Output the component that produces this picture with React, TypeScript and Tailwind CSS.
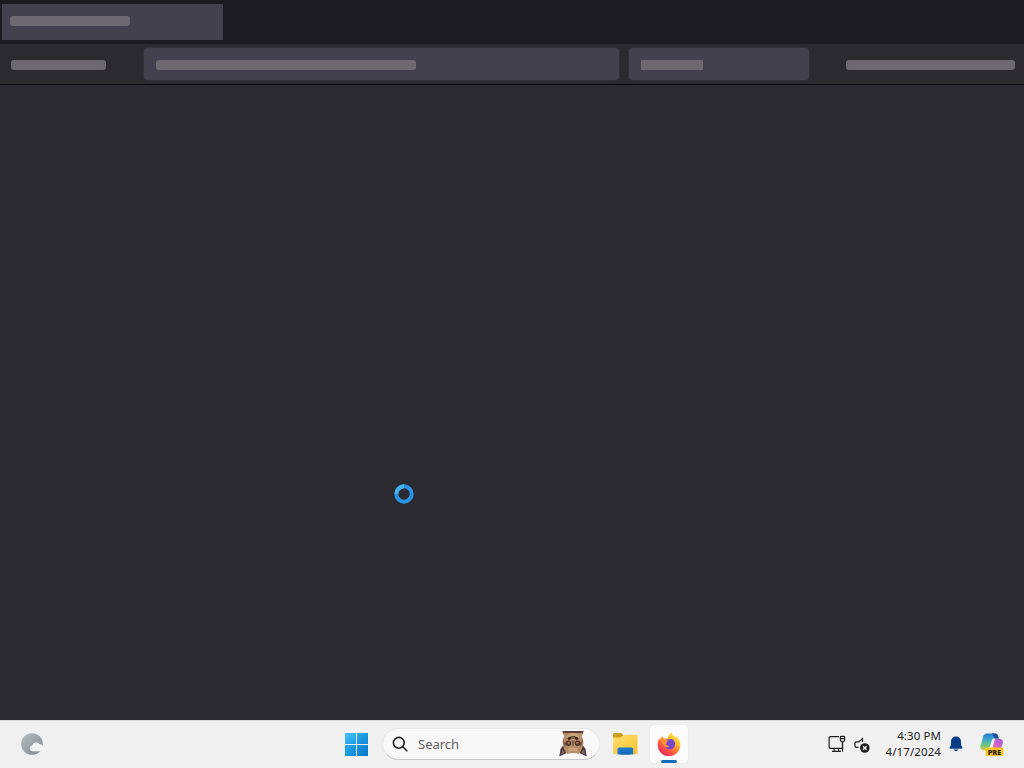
const WeatherIcon = () => (
  <svg width="24" height="24" viewBox="0 0 24 24">
    <defs>
      <linearGradient id="moon" x1="0" y1="0" x2="1" y2="1">
        <stop offset="0" stopColor="#b4bcc0" />
        <stop offset="1" stopColor="#7f898f" />
      </linearGradient>
    </defs>
    <circle cx="12" cy="12" r="10.8" fill="url(#moon)" />
    <path
      d="M12.500 19.300a3 3 0 0 1-.5-5.900 4.200 4.200 0 0 1 7.400-1.400 3.500 3.500 0 0 1 3.500 3.600 3.700 3.700 0 0 1-3.600 3.700Z"
      fill="#f0f3f5"
    />
  </svg>
);

const StartIcon = () => (
  <svg width="24" height="24" viewBox="0 0 24 24">
    <defs>
      <linearGradient id="win" x1="0" y1="0" x2="24" y2="24" gradientUnits="userSpaceOnUse">
        <stop offset="0" stopColor="#4cc4f6" />
        <stop offset=".5" stopColor="#1799e2" />
        <stop offset="1" stopColor="#0873cb" />
      </linearGradient>
    </defs>
    <path d="M0 1h11v11H0ZM12 1h11v11H12ZM0 13h11v11H0ZM12 13h11v11H12Z" fill="url(#win)" />
  </svg>
);

// Upside-down bat that hangs in the search box
const BatIcon = () => (
  <svg width="28" height="26" viewBox="0 0 28 26">
    <path d="M5 13 1.500 18 .3 25.500 7.500 22ZM23 13l3.500 5 1.200 7.500L20.500 22Z" fill="#463a3d" />
    <path d="M3.300 18.500 2 23.500l3.500-2ZM24.700 18.500l1.300 5-3.500-2Z" fill="#8b6a5e" />
    <path
      d="M3.500 0h21c0 2.500-.6 3.500-2 5 1.500 2 2.200 5.500 1.700 8.500-.5 3.500-2.200 6.500-4.200 9.500-3.500-1.200-8.500-1.200-12 0-2-3-3.700-6-4.200-9.500C3.300 10.500 4 7 5.500 5 4.100 3.500 3.500 2.500 3.500 0Z"
      fill="#b68d68"
    />
    <path d="M3.500 0h21l-.7 2H4.200Z" fill="#594039" />
    <path d="M4.500 8c.5 2 1 3 2.800 4l-1 4c-1.600-2-2.400-5-1.800-8ZM23.500 8c-.5 2-1 3-2.800 4l1 4c1.600-2 2.400-5 1.800-8Z" fill="#795948" />
    <ellipse cx="14" cy="5.500" rx="6.200" ry="3.500" fill="#cca47a" />
    <path d="M8.500 8c0-3.800 11-3.800 11 0l-1.800 1.200c-1.800-2-5.600-2-7.400 0Z" fill="#3b2822" />
    <path d="M12 7.300c1-.7 3-.7 4 0" stroke="#c88367" fill="none" />
    <circle cx="9.400" cy="12.200" r="2.700" fill="#49322a" />
    <circle cx="18.600" cy="12.200" r="2.700" fill="#49322a" />
    <circle cx="9.600" cy="12" r="1.300" fill="#a86e4e" />
    <circle cx="18.400" cy="12" r="1.300" fill="#a86e4e" />
    <path d="M12.700 9.500h2.600l-.3 5h-2Z" fill="#835f49" />
    <path d="M9 17.500c3-1.500 7-1.500 10 0l-1.200 3c-2.500-.6-5.100-.6-7.600 0Z" fill="#cba27c" />
  </svg>
);

const ExplorerIcon = () => (
  <svg width="25" height="24" viewBox="0 0 25 24">
    <defs>
      <linearGradient id="folder" x1="0" y1="0" x2="1" y2="1">
        <stop offset="0" stopColor="#ffdf6e" />
        <stop offset="1" stopColor="#f6c02f" />
      </linearGradient>
    </defs>
    <path d="M0 2.500A1.500 1.500 0 0 1 1.500 1h6.800L10.500 3.200V8H0Z" fill="#cb9f1c" />
    <path d="M0 5.500h7.500L11 2.800h12.200A1.300 1.300 0 0 1 24.500 4v17a1.300 1.300 0 0 1-1.300 1.300H1.500A1.500 1.500 0 0 1 0 20.800Z" fill="url(#folder)" />
    <path d="M4.500 22.500v-5.300a1.800 1.800 0 0 1 1.800-1.800h12.100a1.800 1.800 0 0 1 1.800 1.800v5.300Z" fill="#1877c8" />
    <path d="M7.500 19.800H17v2.700H7.500Z" fill="#1169b8" />
  </svg>
);

const FirefoxIcon = () => (
  <svg width="24" height="24" viewBox="0 0 24 24">
    <defs>
      <linearGradient id="fox" x1="20" y1="2" x2="5" y2="22" gradientUnits="userSpaceOnUse">
        <stop offset="0" stopColor="#fff04a" />
        <stop offset=".35" stopColor="#ffb52b" />
        <stop offset=".65" stopColor="#ff6539" />
        <stop offset="1" stopColor="#ed2560" />
      </linearGradient>
    </defs>
    <path
      d="M14.700.5c.2 2.400 2.200 3.200 3.500 4.700l.8-1c2.800 2.200 4.400 5.400 4.300 8.700a11.300 11.300 0 0 1-22.600 0c0-3.300.9-5.400 2-6.700l.3 1.500c.6-1.700 1.700-2.800 2.900-3.400 0 1 .4 1.900.9 2.400 1.200-.3 2.400-.3 3.600.1.700-2.800 2.100-4.800 4.300-6.300Z"
      fill="url(#fox)"
    />
    <path d="M7.600 9c1.400-1.700 3.200-2.100 4.700-1.500 1.300-.7 2.900-.5 3.900.3 2.100 1.500 2.500 4.800 1.100 7.200-1.500 2.300-4.700 3-7 1.700-1.700-1-2.700-2.600-2.600-4.300Z" fill="#7547ce" />
    <path d="M3.200 8c1.500-1.500 3.700-1.600 5.300-1 .7.300 1.300.9 1.700 1.300h1.300c-.3 1.200-1.600 1.400-1.900 2-.3.900.3 1.500-.8 2 1 1.300 2.400 1.200 3.600 1.600-1 1.500-3 1.800-4.500.6-2.200-1.500-3.200-4.200-4.700-6.500Z" fill="#ff9232" />
  </svg>
);

const NetworkIcon = () => (
  <svg width="18" height="18" viewBox="0 0 18 18" fill="none" stroke="#202020" strokeWidth="1.200">
    <path d="M11 1.600H2.500A1.400 1.400 0 0 0 1.100 3v9a1.400 1.400 0 0 0 1.400 1.400H14.500V6.500" />
    <path d="M6.200 13.500v2.800M10.500 13.500v2.800M4 16.400h9" />
    <path d="M14.500 6.500v10.100" />
    <path d="M13 1.400h3a.6.6 0 0 1 .6.600v3a1.500 1.500 0 0 1-1.500 1.500h-1.200A1.500 1.500 0 0 1 12.400 5V2a.6.600 0 0 1 .6-.6ZM12.600 3.600h4" />
  </svg>
);

const MutedIcon = () => (
  <svg width="16" height="16" viewBox="0 0 16 16">
    <path d="M8.500 5V1.600L5 4.800H2.300A1.300 1.300 0 0 0 1 6v3a1.300 1.300 0 0 0 1.300 1.300h2.200" fill="none" stroke="#202020" strokeWidth="1.200" />
    <circle cx="10.800" cy="11" r="4.800" fill="#202020" />
    <path d="m9 9.200 3.600 3.600m0-3.600L9 12.800" stroke="#f1f1f1" strokeWidth="1.300" />
  </svg>
);

const BellIcon = () => (
  <svg width="14" height="16" viewBox="0 0 14 16" fill="#053a87">
    <path d="M7 .5a5 5 0 0 0-5 5V9L.6 11.500a.8.8 0 0 0 .7 1.200h11.400a.8.800 0 0 0 .7-1.200L12 9V5.500a5 5 0 0 0-5-5ZM4.800 13.500a2.300 2.300 0 0 0 4.400 0Z" />
  </svg>
);

const CopilotIcon = () => (
  <svg width="24" height="24" viewBox="0 0 24 24">
    <defs>
      <linearGradient id="copA" x1="0" y1="0" x2="0" y2="1">
        <stop offset="0" stopColor="#2a76cf" />
        <stop offset=".35" stopColor="#3fa9cf" />
        <stop offset=".7" stopColor="#6fc37b" />
        <stop offset="1" stopColor="#e3cb45" />
      </linearGradient>
      <linearGradient id="copB" x1="1" y1="0" x2="0" y2="1">
        <stop offset="0" stopColor="#9a5ae0" />
        <stop offset=".5" stopColor="#d766c4" />
        <stop offset="1" stopColor="#f7936b" />
      </linearGradient>
    </defs>
    <path d="M7 1.500h8c1.800 0 2.500 1 3 2.500l.8 2.500h-4c-1.500 0-2.300.8-2.700 2l-2 7c-.6 2-1.500 3-3.400 3H4c-2.500 0-4.300-1.600-3.500-4.500L3 5c.7-2.300 1.900-3.500 4-3.500Z" fill="url(#copA)" />
    <path d="M12 1.500h3c1.800 0 2.500 1 3 2.500l.8 2.500h-4Z" fill="#1d4f9f" />
    <path d="M15.500 7h4c2.800 0 4 1.700 3.200 4.500l-2 6.500c-.6 2-2 3.500-4 3.500H9c1.800 0 2.400-1.200 2.900-3l2.600-10c.2-.8.500-1.500 1-1.500Z" fill="url(#copB)" />
    <path d="m10.500 12 1.500-4c.4-1.100 1-1.500 2.300-1.500l-2.100 6.500-1.200 3H9.200Z" fill="#ececf4" />
    <rect x="5.500" y="15.500" width="18" height="8.500" rx="1.500" fill="#f8c522" />
    <text x="14.500" y="22.500" fontFamily="Open Sans, sans-serif" fontSize="7.400" fontWeight="800" textAnchor="middle" fill="#2d2206">
      PRE
    </text>
  </svg>
);

const App = () => {
  return (
    <div className="flex h-screen w-full flex-col overflow-hidden bg-[#2b2a30] font-['Noto_Sans',sans-serif]">
      {/* Tab strip */}
      <div className="flex h-11 shrink-0 bg-[#1c1b20] pl-0.5 pt-1">
        <div className="h-9 w-[221px] bg-[#43414d] pl-2 pt-3">
          <div className="h-2.5 w-[120px] rounded-[3px] bg-[#6c6a70]" />
        </div>
      </div>

      {/* Toolbar */}
      <div className="flex h-[41px] shrink-0 items-center border-b border-[#08080c] bg-[#2b2a2f] pl-[11px]">
        <div className="mt-0.5 h-2.5 w-[95px] rounded-[3px] bg-[#6c6a70]" />
        <div className="ml-[38px] flex h-8 w-[475px] items-center rounded bg-[#43414d] pl-3 pt-0.5 shadow-[0_0_2px_#43414d]">
          <div className="h-2.5 w-[260px] rounded-[3px] bg-[#6c6a70]" />
        </div>
        <div className="ml-2.5 flex h-8 w-[180px] items-center rounded bg-[#43414d] pl-3 pt-0.5 shadow-[0_0_2px_#43414d]">
          <div className="h-2.5 w-[62px] bg-[#6c6a70]" />
        </div>
        <div className="ml-[37px] mt-0.5 h-2.5 w-[169px] rounded-[3px] bg-[#6c6a70]" />
      </div>

      {/* Page, still loading */}
      <div className="relative flex-1">
        <svg className="absolute left-[394px] top-[399px]" width="20" height="20" viewBox="0 0 20 20" fill="none">
          <circle cx="10" cy="10" r="7.700" stroke="#2993e6" strokeWidth="4" />
          <path d="M2.300 10A7.700 7.700 0 0 1 10 2.300" stroke="#42b3ef" strokeWidth="4" />
        </svg>
      </div>

      {/* Taskbar */}
      <div className="flex h-12 shrink-0 items-center border-t border-[#d9d7dc] bg-[#f0f0f0] pb-px pl-5">
        <WeatherIcon />
        <div className="ml-[301px]">
          <StartIcon />
        </div>
        <div className="ml-[13px] flex h-8 w-[218px] items-center rounded-full border border-[#e6e6e6] border-b-[#c9c9c9] bg-[#f8f8f8] pl-2">
          <svg width="18" height="18" viewBox="0 0 18 18" fill="none" stroke="#222" strokeWidth="1.600">
            <circle cx="7.800" cy="7.800" r="5.400" />
            <path d="m11.800 11.800 4 4" strokeLinecap="round" />
          </svg>
          <span className="ml-[9px] w-[141px] pt-px text-[13px] text-[#5c5c5c]">Search</span>
          <BatIcon />
        </div>
        <div className="ml-[13px]">
          <ExplorerIcon />
        </div>
        <div className="ml-3 flex h-[38px] w-[38px] flex-col items-center rounded bg-[#fbfbfb] pt-[7px] shadow-[0_0_1px_#cfcfcf]">
          <FirefoxIcon />
          <div className="mt-1 h-[3px] w-4 rounded-full bg-[#0f6cbd]" />
        </div>

        <div className="ml-[140px] flex items-center">
          <NetworkIcon />
          <div className="ml-2 pt-0.5">
            <MutedIcon />
          </div>
        </div>
        <div className="ml-px w-[70px] text-right text-[11.490px] leading-4 tracking-[0.1px] text-[#202020]">
          <div>4:30 PM</div>
          <div>4/17/2024</div>
        </div>
        <div className="ml-2">
          <BellIcon />
        </div>
        <div className="ml-[17px]">
          <CopilotIcon />
        </div>
      </div>
    </div>
  );
};

export default App;
